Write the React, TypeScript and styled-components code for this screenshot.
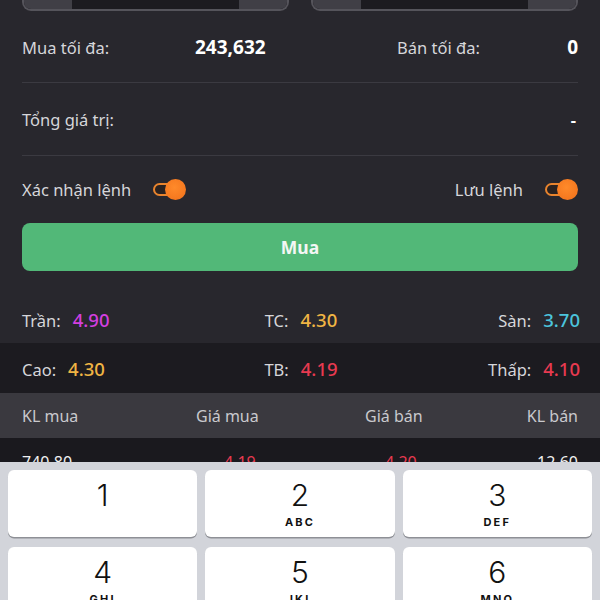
import React from 'react';
import styled, { createGlobalStyle } from 'styled-components';

const GlobalStyle = createGlobalStyle`
  html, body {
    margin: 0;
    padding: 0;
    background: #28272d;
    overflow: hidden;
  }
  body {
    font-family: 'Noto Sans', 'Liberation Sans', sans-serif;
    color: #d4d4d8;
  }
`;

const Page = styled('div')`
  width: 600px;
  height: 600px;
  background: #28272d;
  position: relative;
  overflow: hidden;
`;

const Section = styled('div')`
  padding: 0 22px;
`;

const InputRow = styled('div')`
  display: flex;
  gap: 22px;
  height: 11px;
`;

const Stepper = styled('div')`
  flex: 1;
  display: flex;
  border: 2px solid #55545b;
  border-top: none;
  border-radius: 0 0 9px 9px;
  overflow: hidden;
  background: #1c1b20;
`;

const StepButton = styled('div')`
  width: 48px;
  background: #403f46;
`;

const StepField = styled('div')`
  flex: 1;
`;

const InfoRow = styled('div')<{ $h: number; $line?: boolean }>`
  height: ${(p) => p.$h}px;
  display: flex;
  align-items: center;
  font-size: 16.5px;
  border-bottom: ${(p) => (p.$line ? '1px solid #3b3a41' : 'none')};
`;

const Half = styled('div')<{ $lead: number }>`
  flex: none;
  width: 50%;
  box-sizing: border-box;
  display: flex;
  align-items: baseline;
  padding-left: ${(p) => p.$lead}px;
`;

const Label = styled('span')<{ $w?: number }>`
  color: #d6d6da;
  width: ${(p) => (p.$w ? `${p.$w}px` : 'auto')};
  flex-shrink: 0;
`;

const Value = styled('span')`
  color: #ffffff;
  font-weight: 700;
  font-size: 19px;
`;

const Spacer = styled('div')`
  flex: 1;
`;

const Dash = styled('span')`
  color: #ffffff;
  font-weight: 700;
  margin-right: 2px;
`;

const ToggleGroup = styled('div')`
  display: flex;
  align-items: center;
  gap: 22px;
`;

const Toggle = styled('div')`
  position: relative;
  width: 33px;
  height: 21px;
  &::before {
    content: '';
    position: absolute;
    left: 0;
    top: 4px;
    width: 22px;
    height: 13px;
    box-sizing: border-box;
    border: 2px solid #e8842e;
    border-radius: 7px;
    background: #2a2220;
  }
  &::after {
    content: '';
    position: absolute;
    right: 0;
    top: 0;
    width: 21px;
    height: 21px;
    border-radius: 50%;
    background: radial-gradient(circle at 45% 40%, #ff8a2a, #f0701a);
  }
`;

const BuyButton = styled('button')`
  display: block;
  width: 100%;
  height: 48px;
  border: none;
  border-radius: 8px;
  background: #52b878;
  color: #f4f6f4;
  font-family: 'Noto Sans', 'Liberation Sans', sans-serif;
  font-size: 17.5px;
  font-weight: 700;
`;

const Gap = styled('div')`
  height: 24px;
`;

const PriceRow = styled('div')<{ $dark?: boolean; $h: number }>`
  height: ${(p) => p.$h}px;
  padding: 0 20px 0 22px;
  background: ${(p) => (p.$dark ? '#1c1b20' : 'transparent')};
  display: grid;
  grid-template-columns: 1fr auto 1fr;
  align-items: center;
  font-size: 16.5px;
`;

const PriceCell = styled('div')<{ $align: string }>`
  display: flex;
  align-items: baseline;
  gap: 12px;
  justify-content: ${(p) => p.$align};
`;

const Price = styled('span')<{ $color: string }>`
  color: ${(p) => p.$color};
  font-weight: 500;
  font-size: 18.5px;
`;

const TableRow = styled('div')<{ $head?: boolean }>`
  height: ${(p) => (p.$head ? 45 : 48)}px;
  background: ${(p) => (p.$head ? '#3a393f' : '#1a191e')};
  padding: 0 22px;
  display: grid;
  grid-template-columns: 160px 180px 1fr 1fr;
  align-items: center;
  font-size: 16px;
  color: ${(p) => (p.$head ? '#c9c9cd' : '#f0f0f0')};
`;

const Cell = styled('span')<{ $align: 'left' | 'right'; $color?: string; $pad?: number }>`
  text-align: ${(p) => p.$align};
  color: ${(p) => p.$color || 'inherit'};
  padding-left: ${(p) => p.$pad || 0}px;
`;

const Keyboard = styled('div')`
  position: absolute;
  left: 0;
  right: 0;
  top: 462px;
  bottom: 0;
  background: #d2d4da;
  padding: 8px 8px 0;
  display: grid;
  grid-template-columns: repeat(3, 1fr);
  column-gap: 8px;
  row-gap: 10px;
  grid-auto-rows: 67px;
`;

const Key = styled('div')`
  background: #ffffff;
  border-radius: 6px;
  box-shadow: 0 1.5px 0 #8e9096;
  display: flex;
  flex-direction: column;
  align-items: center;
  padding-top: 7px;
  font-family: Inter, Roboto, 'Liberation Sans', sans-serif;
  color: #111;
`;

const Digit = styled('span')`
  font-size: 30px;
  line-height: 36px;
  font-weight: 300;
`;

const Letters = styled('span')`
  font-size: 11px;
  font-weight: 700;
  letter-spacing: 2.2px;
  margin-top: 2px;
`;

const KEYS = [
  ['1', ''],
  ['2', 'ABC'],
  ['3', 'DEF'],
  ['4', 'GHI'],
  ['5', 'JKL'],
  ['6', 'MNO'],
];

const RED = '#e83a50';
const GOLD = '#f0b544';

export default function App() {
  return (
    <Page>
      <GlobalStyle />
      <Section>
        <InputRow>
          <Stepper>
            <StepButton />
            <StepField />
            <StepButton />
          </Stepper>
          <Stepper>
            <StepButton />
            <StepField />
            <StepButton />
          </Stepper>
        </InputRow>

        <InfoRow $h={71} $line>
          <Half $lead={0}>
            <Label $w={173}>Mua tối đa:</Label>
            <Value>243,632</Value>
          </Half>
          <Half $lead={97}>
            <Label>Bán tối đa:</Label>
            <Spacer />
            <Value>0</Value>
          </Half>
        </InfoRow>

        <InfoRow $h={72} $line>
          <Label>Tổng giá trị:</Label>
          <Spacer />
          <Dash>-</Dash>
        </InfoRow>

        <InfoRow $h={67}>
          <ToggleGroup>
            <Label>Xác nhận lệnh</Label>
            <Toggle />
          </ToggleGroup>
          <Spacer />
          <ToggleGroup>
            <Label>Lưu lệnh</Label>
            <Toggle />
          </ToggleGroup>
        </InfoRow>

        <BuyButton>Mua</BuyButton>
      </Section>

      <Gap />

      <PriceRow $h={48}>
        <PriceCell $align="flex-start">
          <Label>Trần:</Label>
          <Price $color="#d43fe0">4.90</Price>
        </PriceCell>
        <PriceCell $align="center">
          <Label>TC:</Label>
          <Price $color={GOLD}>4.30</Price>
        </PriceCell>
        <PriceCell $align="flex-end">
          <Label>Sàn:</Label>
          <Price $color="#4cc4dc">3.70</Price>
        </PriceCell>
      </PriceRow>
      <PriceRow $h={50} $dark>
        <PriceCell $align="flex-start">
          <Label>Cao:</Label>
          <Price $color={GOLD}>4.30</Price>
        </PriceCell>
        <PriceCell $align="center">
          <Label>TB:</Label>
          <Price $color={RED}>4.19</Price>
        </PriceCell>
        <PriceCell $align="flex-end">
          <Label>Thấp:</Label>
          <Price $color={RED}>4.10</Price>
        </PriceCell>
      </PriceRow>

      <TableRow $head>
        <Cell $align="left">KL mua</Cell>
        <Cell $align="left" $pad={14}>Giá mua</Cell>
        <Cell $align="left" $pad={3}>Giá bán</Cell>
        <Cell $align="right">KL bán</Cell>
      </TableRow>
      <TableRow>
        <Cell $align="left">740,80</Cell>
        <Cell $align="left" $pad={42} $color={RED}>4.19</Cell>
        <Cell $align="left" $pad={23} $color={RED}>4.20</Cell>
        <Cell $align="right">12,60</Cell>
      </TableRow>

      <Keyboard>
        {KEYS.map(([d, l]) => (
          <Key key={d}>
            <Digit>{d}</Digit>
            {l && <Letters>{l}</Letters>}
          </Key>
        ))}
      </Keyboard>
    </Page>
  );
}
